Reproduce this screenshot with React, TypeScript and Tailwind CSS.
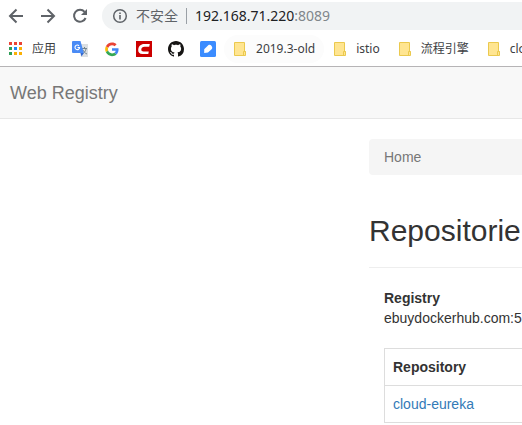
import type { ReactNode } from "react";

function Folder() {
  return (
    <svg width="15" height="16" viewBox="0 0 15 16" aria-hidden="true">
      <path d="M1.500 1.500h10v9h1v4h-11z" fill="#ffe591" stroke="#ebc94e" />
      <path d="M10.500 14v-3.500h2" fill="none" stroke="#ebc94e" />
    </svg>
  );
}

const iconBookmark = "flex h-7 shrink-0 items-center px-2";
const appsBookmark = "flex h-7 shrink-0 items-center gap-[9px] px-2 whitespace-nowrap";
const folderBookmark = "flex h-7 shrink-0 items-center gap-2 rounded-full px-[9px] whitespace-nowrap";

function IconBookmark({ label, children }: { label: string; children: ReactNode }) {
  return (
    <button type="button" aria-label={label} className={iconBookmark}>
      {children}
    </button>
  );
}

function FolderBookmark({ label, hovered }: { label: string; hovered?: boolean }) {
  return (
    <button type="button" className={folderBookmark + (hovered ? " bg-[#fcfcfc]" : "")}>
      <Folder />
      {label}
    </button>
  );
}

function AppsIcon() {
  const colors = ["#ea4335", "#ea4335", "#ea4335", "#2e9e57", "#1a88f5", "#fbb005", "#2e9e57", "#fbb005", "#fbb005"];
  return (
    <svg width="14" height="14" viewBox="0 0 14 14" shapeRendering="crispEdges" aria-hidden="true">
      {colors.map((c, i) => (
        <rect key={i} x={(i % 3) * 5} y={Math.floor(i / 3) * 5} width="3" height="3" fill={c} />
      ))}
    </svg>
  );
}

function TranslateIcon() {
  return (
    <svg width="16" height="16" viewBox="0 0 16 16" aria-hidden="true">
      <path d="M6 3h10v13H9z" fill="#dcdfe2" />
      <path d="M10 7.500h5M12.500 6v1.500M14 8c-.5 2.500-2 4-4 5M11 9c.7 1.800 2 3.200 4 4" fill="none" stroke="#74858f" />
      <path d="M1 0h7.500l3.300 12H1a1 1 0 0 1-1-1V1a1 1 0 0 1 1-1z" fill="#4a8bf5" />
      <path d="M8.500 12h3.300L9.500 15.500z" fill="#3267d0" />
      <path d="M7 4.800A2.300 2.300 0 1 0 7.600 6.500H5.500" fill="none" stroke="#fff" strokeWidth="1.100" />
    </svg>
  );
}

function GoogleIcon() {
  return (
    <svg width="16" height="16" viewBox="-4 -5 56 56" aria-hidden="true">
      <path fill="#EA4335" d="M24 9.500c3.540 0 6.710 1.220 9.210 3.600l6.850-6.850C35.900 2.380 30.470 0 24 0 14.620 0 6.510 5.380 2.560 13.220l7.980 6.190C12.430 13.720 17.740 9.500 24 9.500z" />
      <path fill="#4285F4" d="M46.980 24.550c0-1.570-.15-3.090-.38-4.550H24v9.020h12.940c-.58 2.960-2.260 5.480-4.780 7.180l7.730 6c4.510-4.180 7.090-10.360 7.090-17.650z" />
      <path fill="#FBBC05" d="M10.530 28.590c-.48-1.450-.76-2.990-.76-4.590s.27-3.140.76-4.590l-7.980-6.190C.92 16.460 0 20.120 0 24s.92 7.540 2.560 10.780l7.970-6.190z" />
      <path fill="#34A853" d="M24 48c6.480 0 11.930-2.130 15.890-5.810l-7.730-6c-2.150 1.450-4.920 2.300-8.160 2.300-6.260 0-11.570-4.220-13.470-9.910l-7.980 6.190C6.510 42.620 14.620 48 24 48z" />
    </svg>
  );
}

function CIcon() {
  return (
    <svg width="16" height="16" viewBox="0 0 16 16" aria-hidden="true">
      <path d="M0 0h16v16H0z" fill="#cc0000" />
      <path
        d="M13.800 3l-.6 2.800H8.500C6.500 5.800 5.500 7 5.300 8.400c-.1 1.200.7 2 2.200 2h5.300L12.300 13H6.500C3.500 13 2 11.300 2.200 8.700 2.500 5.200 4.800 3 8.200 3z"
        fill="#fff"
      />
    </svg>
  );
}

function GithubIcon() {
  return (
    <svg width="16" height="16" viewBox="0 0 16 16" aria-hidden="true">
      <path fill="#161514" d="M8 0C3.580 0 0 3.580 0 8c0 3.540 2.290 6.530 5.470 7.590.4.070.55-.17.55-.38 0-.19-.01-.82-.01-1.490-2.010.37-2.530-.49-2.690-.94-.09-.23-.48-.94-.82-1.130-.28-.15-.68-.52-.01-.53.63-.01 1.080.58 1.230.82.72 1.210 1.870.87 2.330.66.07-.52.28-.87.51-1.070-1.780-.2-3.640-.89-3.640-3.950 0-.87.31-1.590.82-2.150-.08-.2-.36-1.020.08-2.120 0 0 .67-.21 2.200.82.64-.18 1.320-.27 2-.27s1.360.09 2 .27c1.530-1.040 2.200-.82 2.200-.82.44 1.100.16 1.920.08 2.120.51.56.82 1.270.82 2.150 0 3.070-1.870 3.750-3.650 3.950.29.25.54.73.54 1.480 0 1.070-.01 1.930-.01 2.200 0 .21.15.46.55.38A8.010 8.010 0 0 0 16 8c0-4.420-3.580-8-8-8z" />
    </svg>
  );
}

function BlueIcon() {
  return (
    <svg width="16" height="16" viewBox="0 0 16 16" aria-hidden="true">
      <rect width="16" height="16" rx="1.500" fill="#3b8cff" />
      <path d="M4.200 12V8.300L8.500 4c1.200-.7 2.200-.3 2.900.7 1 1.200 1.200 2.300.2 3.600L8 11.500z" fill="#fff" />
    </svg>
  );
}

const iconButton = "flex size-8 shrink-0 items-center justify-center";

export default function App() {
  return (
    <div className="min-h-screen overflow-hidden bg-white font-['Liberation_Sans',Arial,sans-serif] text-sm leading-5 text-[#333333]">
      <header className="border-b border-[#b6b4b6] font-['Noto_Sans','Noto_Sans_CJK_SC',sans-serif]">
        <div className="flex h-8 items-center">
          <button type="button" aria-label="Back" className={iconButton}>
            <svg width="16" height="16" viewBox="0 0 16 16" fill="none" stroke="#5f6368" strokeWidth="2" aria-hidden="true">
              <path d="M15 8H2.500M8.500 1.500L2 8l6.500 6.500" />
            </svg>
          </button>
          <button type="button" aria-label="Forward" className={iconButton}>
            <svg width="16" height="16" viewBox="0 0 16 16" fill="none" stroke="#5f6368" strokeWidth="2" aria-hidden="true">
              <path d="M1 8h12.500M7.500 1.500L14 8l-6.500 6.500" />
            </svg>
          </button>
          <button type="button" aria-label="Reload" className={iconButton}>
            <svg width="16" height="16" viewBox="0 0 16 16" aria-hidden="true">
              <path d="M12.600 3.800A6 6 0 1 0 13.600 10" fill="none" stroke="#5f6368" strokeWidth="2" />
              <path d="M15 1v6H9z" fill="#5f6368" />
            </svg>
          </button>
          <div className="-mr-8 ml-1.5 flex h-7 flex-1 items-center rounded-full bg-[#f1f3f4] pl-2.5 whitespace-nowrap">
            <button type="button" className="flex items-center gap-2 text-[#5f6368]">
              <svg width="16" height="16" viewBox="0 0 16 16" fill="none" stroke="#5f6368" aria-hidden="true">
                <circle cx="8" cy="8" r="6.300" strokeWidth="1.500" />
                <path d="M8 7v4.500M8 4.500V6" strokeWidth="1.600" />
              </svg>
              不安全
            </button>
            <span className="mx-2 h-4 w-px bg-[#9aa0a6]" />
            <span className="text-[#202124]">
              192.168.71.220<span className="text-[#80868b]">:8089</span>
            </span>
          </div>
        </div>
        <nav aria-label="Bookmarks" className="flex h-[34px] items-center overflow-hidden pl-px text-xs text-[#3c4043]">
          <button type="button" className={appsBookmark}>
            <AppsIcon />
            应用
          </button>
          <IconBookmark label="Translate"><TranslateIcon /></IconBookmark>
          <IconBookmark label="Google"><GoogleIcon /></IconBookmark>
          <IconBookmark label="CSDN"><CIcon /></IconBookmark>
          <IconBookmark label="GitHub"><GithubIcon /></IconBookmark>
          <IconBookmark label="Notes"><BlueIcon /></IconBookmark>
          <FolderBookmark label="2019.3-old" hovered />
          <FolderBookmark label="istio" />
          <FolderBookmark label="流程引擎" />
          <FolderBookmark label="clo" />
        </nav>
      </header>
      <nav aria-label="Main" className="flex h-[52px] items-center border-b border-[#e7e7e7] bg-[#f8f8f8] px-2.5">
        <a href="#home" className="text-lg leading-5 text-[#777777]">Web Registry</a>
      </nav>
      <main className="ml-[369px] pt-5 whitespace-nowrap">
        <nav aria-label="Breadcrumb" className="rounded-l bg-[#f5f5f5] px-[15px] py-2 text-[#777777]">Home</nav>
        <h1 className="mt-10 border-b border-[#eeeeee] pb-5 text-[30px] leading-8">Repositorie</h1>
        <div className="pt-5 pl-[15px]">
          <dl>
            <dt className="font-bold">Registry</dt>
            <dd>ebuydockerhub.com:5</dd>
          </dl>
          <table className="mt-5 w-full border-collapse border border-r-0 border-[#dddddd] text-left">
            <thead>
              <tr className="border-b border-[#dddddd]"><th className="p-2 font-bold">Repository</th></tr>
            </thead>
            <tbody>
              <tr><td className="p-2"><a href="#cloud-eureka" className="text-[#337ab7]">cloud-eureka</a></td></tr>
            </tbody>
          </table>
        </div>
      </main>
    </div>
  );
}
